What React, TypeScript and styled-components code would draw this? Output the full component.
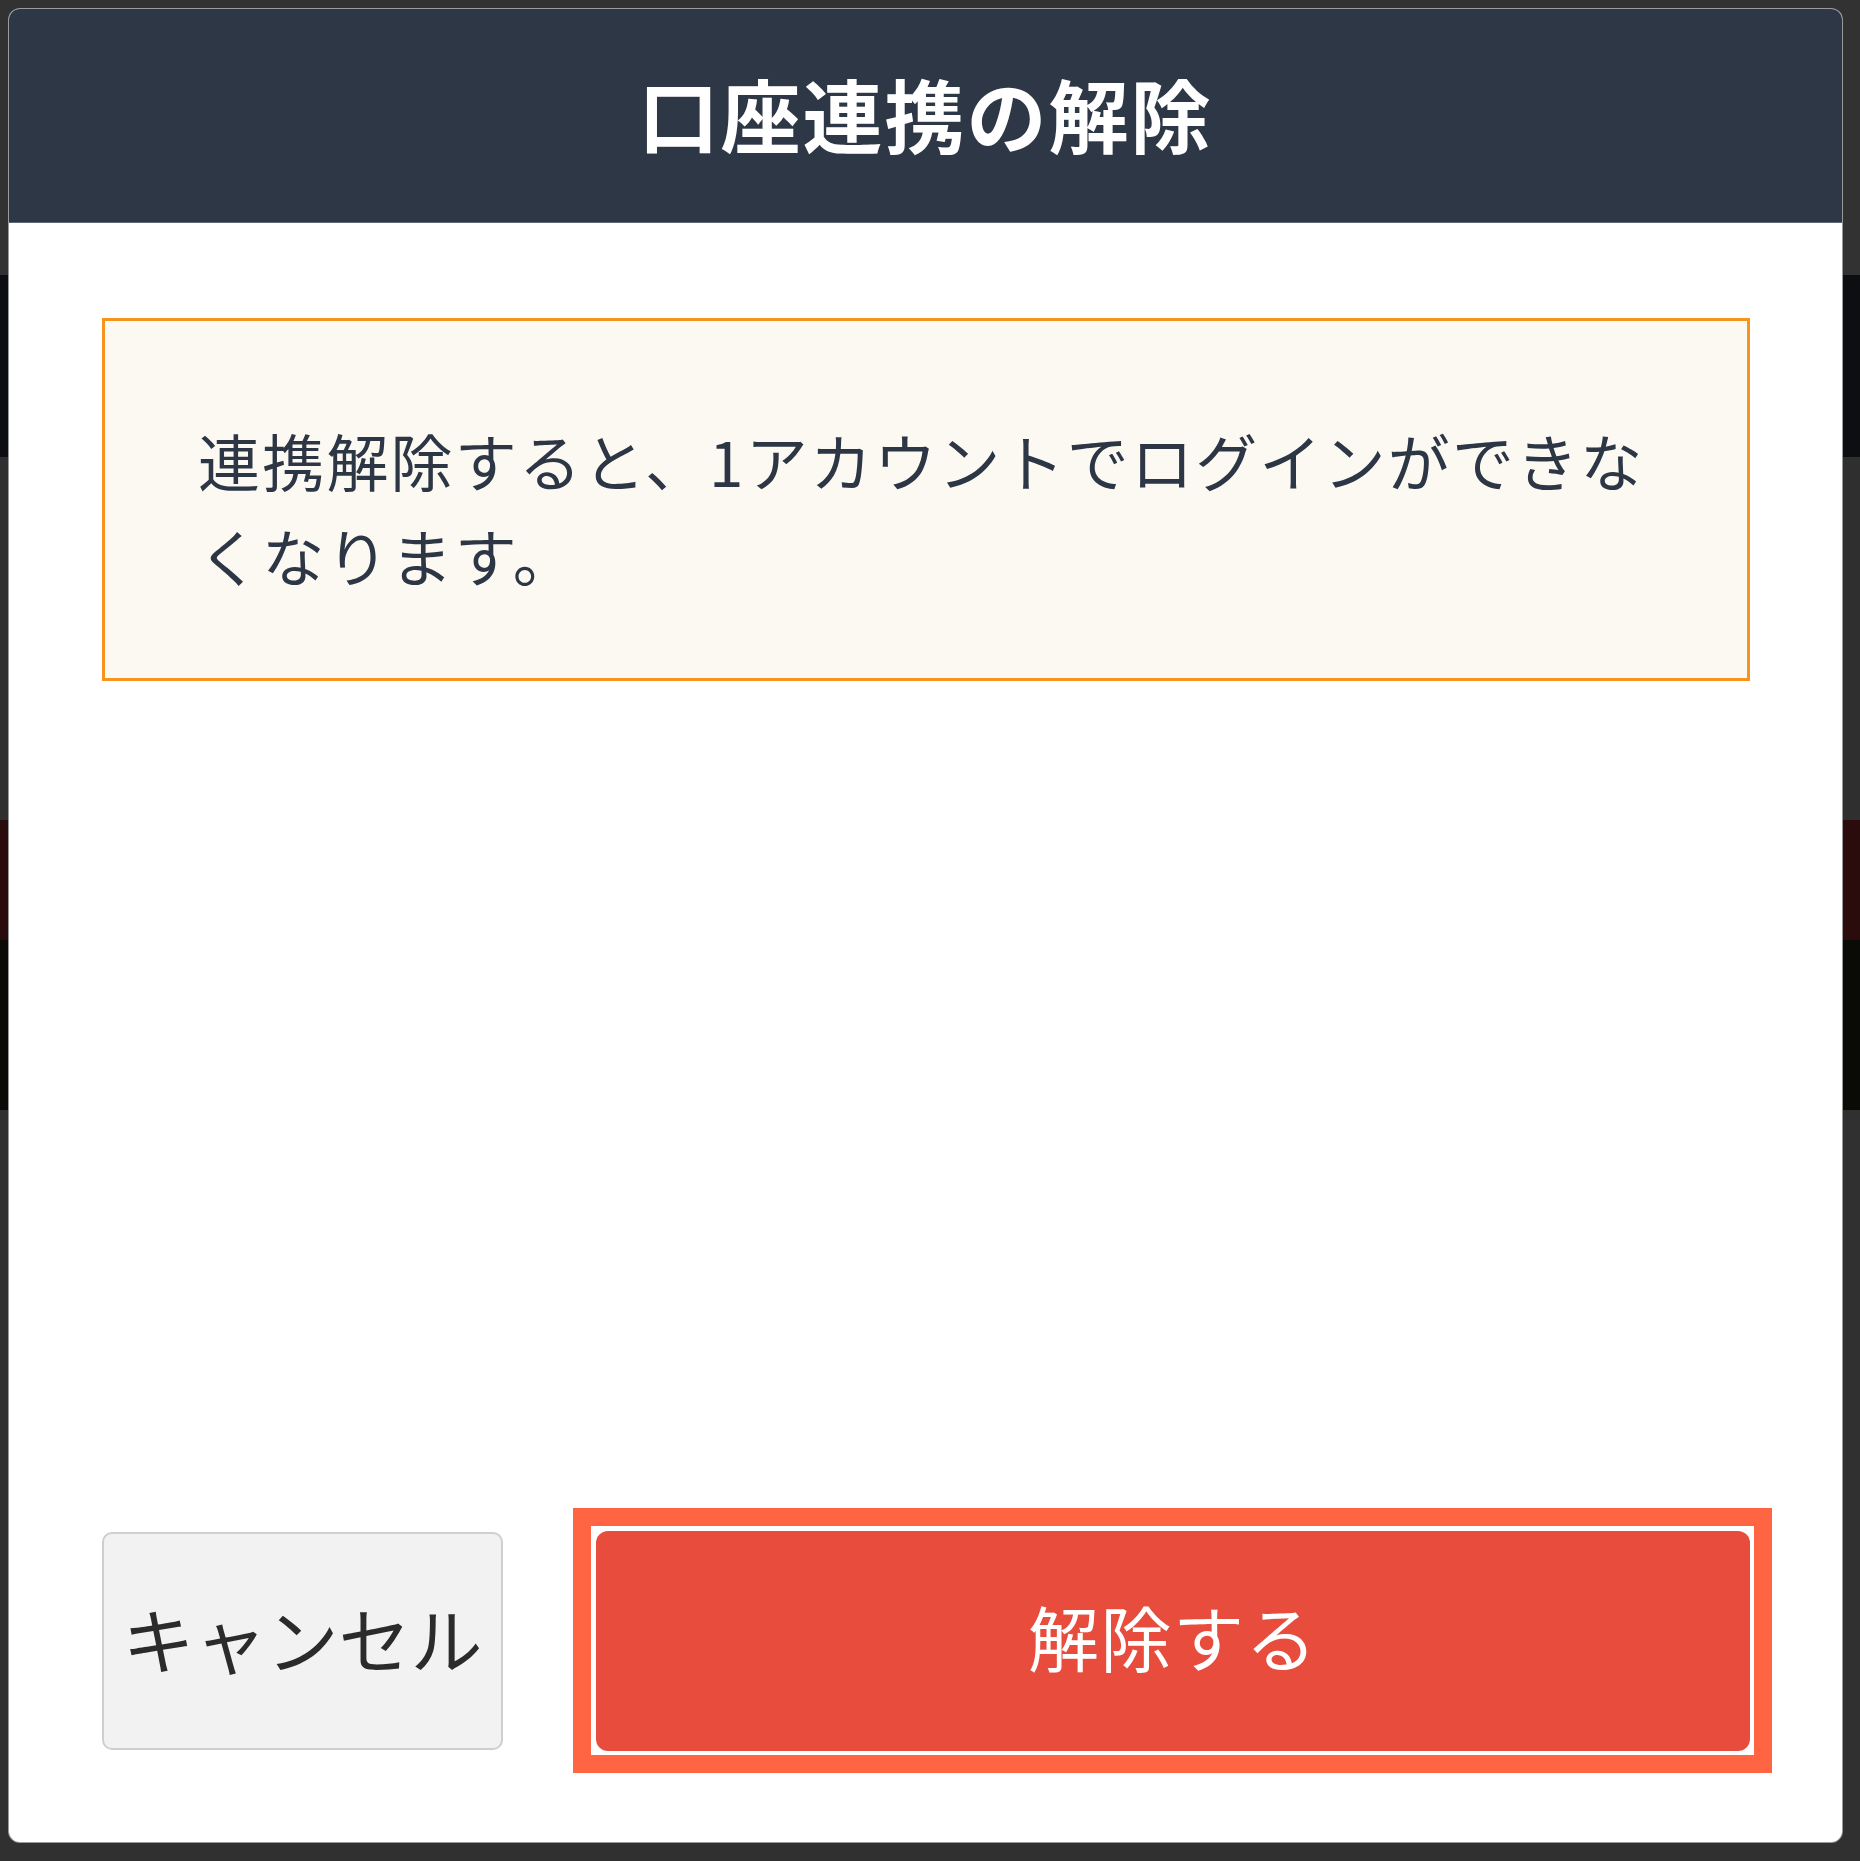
import styled, { createGlobalStyle } from "styled-components";

const GlobalStyle = createGlobalStyle`
  html, body {
    margin: 0;
    padding: 0;
    background: #303030;
  }
  * {
    box-sizing: border-box;
  }
`;

// dimmed page that sits behind the dialog
const Page = styled.div`
  height: 1861px;
  display: flex;
  flex-direction: column;
`;

const Band = styled.div<{ $h: number; $bg: string }>`
  height: ${(p) => p.$h}px;
  background: ${(p) => p.$bg};
`;

const Overlay = styled.div`
  position: fixed;
  inset: 0;
  padding: 9px 18px 19px 9px;
  display: flex;
`;

const Modal = styled.div`
  flex: 1;
  display: flex;
  flex-direction: column;
  background: #fff;
  border-radius: 11px;
  overflow: hidden;
  box-shadow: 0 0 0 1px #9a9a9a;
  font-family: "Noto Sans CJK JP", "Noto Sans", sans-serif;
`;

const Header = styled.header`
  height: 214px;
  flex-shrink: 0;
  display: flex;
  align-items: center;
  justify-content: center;
  padding-bottom: 8px;
  background: #2e3746;
  border-bottom: 1px solid #5e6777;
`;

const Title = styled.h1`
  margin: 0;
  color: #fff;
  font-size: 80px;
  font-weight: 700;
  letter-spacing: 2px;
  line-height: 1;
`;

const Body = styled.div`
  flex: 1;
  display: flex;
  flex-direction: column;
  padding: 95px 92px 91px 93px;
`;

const Notice = styled.div`
  border: 3px solid #f7941d;
  background: #fcf9f2;
  padding: 92px 90px 75px 93px;
`;

const NoticeText = styled.p`
  margin: 0;
  color: #2c3645;
  font-size: 62px;
  letter-spacing: 2.2px;
  line-height: 95px;
`;

const Spacer = styled.div`
  flex: 1;
`;

const Actions = styled.div`
  display: flex;
  align-items: center;
  gap: 93px;
`;

const CancelButton = styled.button`
  width: 401px;
  height: 218px;
  flex-shrink: 0;
  padding: 0 0 10px;
  border: 2px solid #cfcfcf;
  border-radius: 10px;
  background: #f2f2f2;
  color: #2b2b2b;
  font-family: inherit;
  font-size: 72px;
  white-space: nowrap;
  overflow: visible;
  display: flex;
  align-items: center;
  justify-content: center;
`;

const ConfirmButton = styled.button`
  position: relative;
  flex: 1;
  height: 220px;
  padding: 0 0 12px;
  border: none;
  border-radius: 12px;
  background: #e74c3c;
  color: #fff;
  font-family: inherit;
  font-size: 71px;
  letter-spacing: 1.5px;

  /* white gap + orange focus ring */
  &::before {
    content: "";
    position: absolute;
    inset: -5px -4px -4px -5px;
    border-style: solid;
    border-color: #fff;
    border-width: 5px 4px 4px 5px;
    pointer-events: none;
  }
  &::after {
    content: "";
    position: absolute;
    inset: -23px -22px -22px -23px;
    border: 18px solid #ff6542;
    pointer-events: none;
  }
`;

const bands = [
  { h: 275, bg: "#323232" },
  { h: 182, bg: "#0c0e12" },
  { h: 363, bg: "#2f2f2f" },
  { h: 120, bg: "#2a0c0c" },
  { h: 170, bg: "#0a0a06" },
  { h: 751, bg: "#303030" },
];

export default function App() {
  return (
    <>
      <GlobalStyle />
      <Page>
        {bands.map((b, i) => (
          <Band key={i} $h={b.h} $bg={b.bg} />
        ))}
      </Page>
      <Overlay>
        <Modal>
          <Header>
            <Title>口座連携の解除</Title>
          </Header>
          <Body>
            <Notice>
              <NoticeText>
                連携解除すると、1アカウントでログインができなくなります。
              </NoticeText>
            </Notice>
            <Spacer />
            <Actions>
              <CancelButton>キャンセル</CancelButton>
              <ConfirmButton>解除する</ConfirmButton>
            </Actions>
          </Body>
        </Modal>
      </Overlay>
    </>
  );
}
